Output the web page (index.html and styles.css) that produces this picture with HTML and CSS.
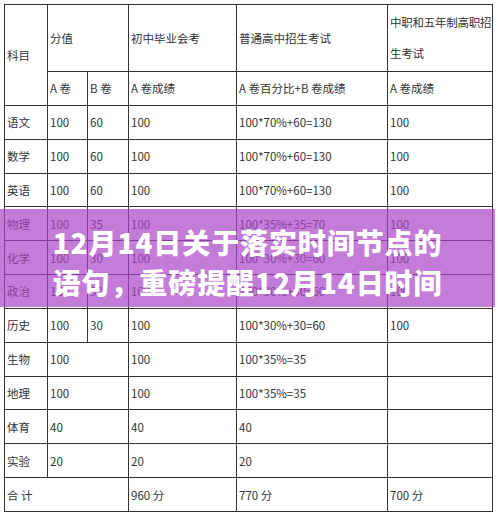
FILE: index.html
```
<!DOCTYPE html>
<html lang="zh-CN">
<head>
<meta charset="utf-8">
<link rel="stylesheet" href="styles.css">
</head>
<body>
<div class="page">
<table class="grid">
  <colgroup>
    <col class="c1"><col class="c2"><col class="c3"><col class="c4"><col class="c5"><col class="c6">
  </colgroup>
  <tr class="h1">
    <td rowspan="2">科目</td>
    <td colspan="2">分值</td>
    <td>初中毕业会考</td>
    <td>普通高中招生考试</td>
    <td class="wrap">中职和五年制高职招生考试</td>
  </tr>
  <tr><td>A 卷</td><td>B 卷</td><td>A 卷成绩</td><td>A 卷百分比+B 卷成绩</td><td>A 卷成绩</td></tr>
  <tr><td>语文</td><td>100</td><td>60</td><td>100</td><td>100*70%+60=130</td><td>100</td></tr>
  <tr><td>数学</td><td>100</td><td>60</td><td>100</td><td>100*70%+60=130</td><td>100</td></tr>
  <tr><td>英语</td><td>100</td><td>60</td><td>100</td><td>100*70%+60=130</td><td>100</td></tr>
  <tr><td>物理</td><td>100</td><td>35</td><td>100</td><td>100*35%+35=70</td><td>100</td></tr>
  <tr><td>化学</td><td>100</td><td>30</td><td>100</td><td>100*30%+30=60</td><td>100</td></tr>
  <tr><td>政治</td><td>100</td><td>30</td><td>100</td><td>100*30%+30=60</td><td>100</td></tr>
  <tr><td>历史</td><td>100</td><td>30</td><td>100</td><td>100*30%+30=60</td><td>100</td></tr>
  <tr><td>生物</td><td colspan="2">100</td><td>100</td><td>100*35%=35</td><td></td></tr>
  <tr><td>地理</td><td colspan="2">100</td><td>100</td><td>100*35%=35</td><td></td></tr>
  <tr><td>体育</td><td colspan="2">40</td><td>40</td><td>40</td><td></td></tr>
  <tr><td>实验</td><td colspan="2">20</td><td>20</td><td>20</td><td></td></tr>
  <tr><td colspan="3">合 计</td><td>960 分</td><td>770 分</td><td>700 分</td></tr>
</table>
<div class="banner">
  <p class="banner-title">12月14日关于落实时间节点的<br>语句，重磅提醒12月14日时间</p>
</div>
</div>
</body>
</html>
```
FILE: styles.css
```
html, body {
  margin: 0;
  padding: 0;
  background: #fff;
}
.page {
  position: relative;
  width: 499px;
  height: 516px;
  overflow: hidden;
  padding: 4px 0 0 4px;
  box-sizing: border-box;
}
.grid {
  border-collapse: collapse;
  table-layout: fixed;
  width: 488px;
  font-family: "Noto Sans CJK SC", "Noto Sans", sans-serif;
  font-size: 11.5px;
  color: #333;
}
.c1 { width: 43px; }
.c2 { width: 40px; }
.c3 { width: 41px; }
.c4 { width: 108px; }
.c5 { width: 151px; }
.c6 { width: 105px; }
.grid td {
  border: 1px solid #333;
  padding: 0 1px 0 2px;
  height: 33.85px;
  line-height: 16px;
  vertical-align: middle;
  white-space: nowrap;
  overflow: hidden;
  box-sizing: border-box;
}
.grid tr.h1 td {
  height: 67px;
}
.grid td.wrap {
  white-space: normal;
  line-height: 31px;
  padding: 0 0 0 2px;
  letter-spacing: -0.25px;
}
.banner {
  position: absolute;
  left: 0;
  top: 209px;
  width: 495px;
  height: 98px;
  background: rgba(170, 70, 200, 0.7);
  box-sizing: border-box;
  padding: 13px 0 0 0;
}
.banner-title {
  margin: 0;
  text-align: center;
  color: #fff;
  font-family: "Noto Sans CJK SC", "Noto Sans", sans-serif;
  font-weight: 900;
  font-size: 28px;
  line-height: 40px;
  letter-spacing: 0.9px;
}
```
